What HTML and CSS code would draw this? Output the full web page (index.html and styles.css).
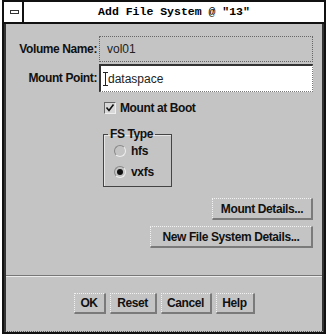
FILE: index.html
```html
<!DOCTYPE html>
<html>
<head>
<meta charset="utf-8">
<link rel="stylesheet" href="styles.css">
</head>
<body>
<div class="window">
  <div class="titlebar">
    <div class="menubox"><span class="menuicon"></span></div>
    <div class="title">Add File System @ "13"</div>
  </div>
  <div class="body">
    <div class="main">
      <div class="form">
        <div class="label">Volume Name:</div>
        <div class="field disabled">vol01</div>
        <div class="label">Mount Point:</div>
        <div class="field editable"><svg class="cursor" width="5" height="14" viewBox="0 0 5 14"><path d="M0 0.5 H5 M2.5 0.5 V13.5 M0 13.5 H5" fill="none" stroke="#222" stroke-width="1"/></svg>dataspace</div>
      </div>
      <div class="check-row">
        <span class="checkbox"><svg width="10" height="10" viewBox="0 0 10 10"><path d="M1.5 4.5 L4 7.5 L8.5 1.5" fill="none" stroke="#111" stroke-width="1.6"/></svg></span>
        <span class="check-label">Mount at Boot</span>
      </div>
      <fieldset class="group">
        <legend class="legend">FS Type</legend>
        <div class="radio-row"><span class="radio"></span><span class="radio-label">hfs</span></div>
        <div class="radio-row"><span class="radio on"></span><span class="radio-label">vxfs</span></div>
      </fieldset>
      <button class="btn btn-mount">Mount Details...</button>
      <button class="btn btn-newfs">New File System Details...</button>
    </div>
    <div class="sep"></div>
    <div class="actions">
      <button class="btn btn-ok">OK</button>
      <button class="btn btn-reset">Reset</button>
      <button class="btn btn-cancel">Cancel</button>
      <button class="btn btn-help">Help</button>
    </div>
  </div>
</div>
</body>
</html>
```
FILE: styles.css
```css
html, body {
  margin: 0;
  padding: 0;
  background: #ffffff;
}
body {
  width: 332px;
  height: 336px;
  overflow: hidden;
  font-family: "Liberation Sans", Arial, sans-serif;
}
.window {
  box-sizing: border-box;
  margin-left: 2px;
  width: 324px;
  height: 334px;
  border: 2px solid #111;
  display: flex;
  flex-direction: column;
  background: #c4c4c4;
}
.titlebar {
  box-sizing: border-box;
  height: 22px;
  border-bottom: 2px solid #111;
  background: #fff;
  display: flex;
}
.menubox {
  width: 18px;
  border-right: 2px solid #111;
  display: flex;
  align-items: center;
  justify-content: center;
}
.menuicon {
  box-sizing: border-box;
  width: 9px;
  height: 4px;
  border: 1px solid #333;
  margin-left: 2px;
}
.title {
  flex: 1;
  text-align: center;
  font-family: "Liberation Mono", "Courier New", monospace;
  font-weight: bold;
  font-size: 11.5px;
  line-height: 20px;
  color: #000;
}
.body {
  flex: 1;
  display: flex;
  flex-direction: column;
  border-left: 2px solid #333;
  border-right: 2px solid #333;
  border-bottom: 1px dotted #555;
}
.main {
  flex: 1;
  display: flex;
  flex-direction: column;
  padding: 12px 9px 0 6px;
}
.form {
  display: grid;
  grid-template-columns: 85px 214px;
  column-gap: 2px;
  row-gap: 2px;
  align-items: center;
}
.label {
  text-align: right;
  font-weight: bold;
  font-size: 12px;
  letter-spacing: -0.4px;
  color: #111;
}
.field {
  box-sizing: border-box;
  font-size: 12px;
  color: #222;
  display: flex;
  align-items: center;
  padding-left: 7px;
}
.disabled {
  height: 26px;
  border: 1px dotted #666;
  background: #c4c4c4;
}
.editable {
  height: 28px;
  background: #fff;
  border-top: 2px solid #333;
  border-left: 2px solid #333;
  border-right: 1px dotted #777;
  border-bottom: 1px dotted #777;
  padding-left: 2px;
}
.cursor {
  margin-right: 0;
  margin-top: 1px;
}
.check-row {
  margin-top: 9px;
  margin-left: 92px;
  height: 14px;
  display: flex;
  align-items: center;
}
.checkbox {
  box-sizing: border-box;
  width: 12px;
  height: 12px;
  background: #d8d8d8;
  border-top: 1px solid #666;
  border-left: 1px solid #666;
  border-right: 1px solid #eee;
  border-bottom: 1px solid #eee;
  display: flex;
  align-items: center;
  justify-content: center;
}
.check-label {
  margin-left: 4px;
  font-weight: bold;
  font-size: 12px;
  letter-spacing: -0.4px;
  color: #111;
}
.group {
  box-sizing: border-box;
  margin: 12px 0 0 91px;
  width: 69px;
  height: 60px;
  padding: 3px 0 0 10px;
  border: 1px solid #444;
  box-shadow: inset 1px 1px 0 #e6e6e6;
}
.legend {
  padding: 0 2px;
  margin-left: -6px;
  font-weight: bold;
  font-size: 12px;
  line-height: 14px;
  letter-spacing: -0.4px;
  color: #111;
}
.radio-row {
  height: 14px;
  display: flex;
  align-items: center;
  margin-bottom: 7px;
}
.radio {
  box-sizing: border-box;
  width: 12px;
  height: 12px;
  border-radius: 50%;
  border-top: 1px solid #888;
  border-left: 1px solid #888;
  border-right: 1px solid #eee;
  border-bottom: 1px solid #eee;
  display: flex;
  align-items: center;
  justify-content: center;
}
.radio.on::after {
  content: "";
  width: 6px;
  height: 6px;
  border-radius: 50%;
  background: #111;
}
.radio-label {
  margin-left: 5px;
  font-weight: bold;
  font-size: 12px;
  letter-spacing: -0.3px;
  color: #111;
}
.btn {
  box-sizing: border-box;
  height: 22px;
  padding: 0;
  background: #c4c4c4;
  border-top: 1px dotted #f2f2f2;
  border-left: 1px dotted #f2f2f2;
  border-right: 2px solid #7a7a7a;
  border-bottom: 2px solid #7a7a7a;
  font-family: "Liberation Sans", Arial, sans-serif;
  font-weight: bold;
  font-size: 12px;
  letter-spacing: -0.4px;
  color: #111;
}
.btn-mount {
  align-self: flex-end;
  margin-top: 11px;
  width: 101px;
}
.btn-newfs {
  align-self: flex-end;
  margin-top: 6px;
  width: 163px;
}
.sep {
  height: 1px;
  background: #777;
  border-bottom: 1px solid #ececec;
}
.actions {
  height: 54px;
  box-sizing: border-box;
  padding-top: 16px;
  display: flex;
  justify-content: center;
  align-items: flex-start;
  gap: 4px;
}
.actions .btn {
  height: 21px;
}
.btn-ok { width: 32px; }
.btn-reset { width: 47px; }
.btn-cancel { width: 51px; }
.btn-help { width: 39px; }
```
